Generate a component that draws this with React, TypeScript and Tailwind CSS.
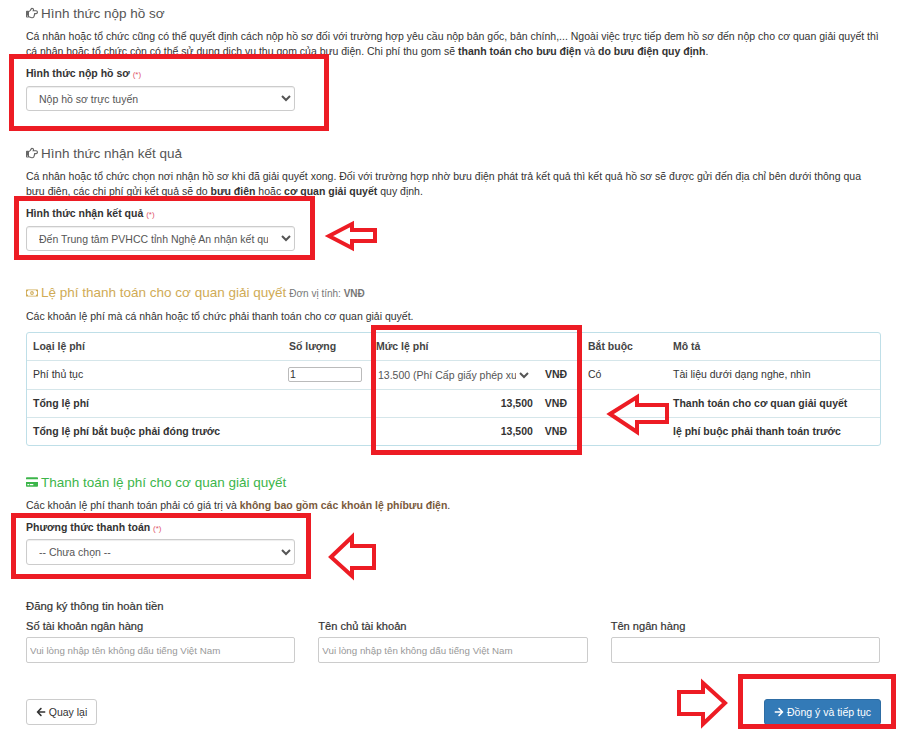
import React from "react";
import { FaRegHandPointRight, FaRegMoneyBillAlt, FaCreditCard, FaArrowLeft, FaArrowRight } from "react-icons/fa";

const RED = "#ed1c24";

function Heading({ icon, children, className = "" }: { icon: React.ReactNode; children: React.ReactNode; className?: string }) {
  return (
    <div className={`flex h-[26px] items-center gap-[3px] text-[13.5px] ${className}`}>
      {icon}
      <span className="whitespace-nowrap">{children}</span>
    </div>
  );
}

function Label({ text, className = "" }: { text: string; className?: string }) {
  return (
    <div className={`h-[15px] text-[10.5px] font-bold leading-[15px] text-[#333] ${className}`}>
      {text} <span className="text-[8px] font-normal text-[#e0556b]">(*)</span>
    </div>
  );
}

function Sel({ text, className = "" }: { text: string; className?: string }) {
  return (
    <select
      defaultValue={text}
      className={`block w-[269px] rounded-[3px] border border-[#ccc] bg-white pl-[8px] pr-[10px] text-[10.5px] text-[#555] shadow-[inset_0_1px_1px_rgba(0,0,0,0.07)] ${className}`}
    >
      <option>{text}</option>
    </select>
  );
}

function Field({ label, placeholder }: { label: string; placeholder?: string }) {
  return (
    <div>
      <div className="h-[15px] text-[11.1px] font-normal leading-[15px] text-[#333] [-webkit-text-stroke:0.2px_#333]">{label}</div>
      <input
        placeholder={placeholder}
        className="mt-[3px] block h-[26px] w-full rounded-[2px] border border-[#ccc] bg-white px-[3px] text-[9.75px] text-[#555] outline-none placeholder:text-[#999]"
      />
    </div>
  );
}

const cell = "border-t border-[#d5e6ea] px-[6px] align-middle";

function Overlay() {
  const rects = [
    [9, 54, 329, 131],
    [14, 196, 315, 260],
    [371, 325, 582, 455],
    [11, 513, 311, 579],
    [738, 674, 896, 729],
  ];
  const arrows = [
    "329,236 352,224 352,230 375,230 375,241 352,241 352,248",
    "610,414 637,397 637,405 667,405 667,422 637,422 637,432",
    "331,557 352,537 352,546 374,546 374,568 352,568 352,576",
    "725,703 703,683 703,692 679,692 679,714 703,714 703,724",
  ];
  return (
    <svg className="pointer-events-none absolute left-0 top-0" width="913" height="733" viewBox="0 0 913 733" fill="none">
      {rects.map(([a, b, c, d], i) => (
        <rect key={i} x={a + 2.5} y={b + 2.5} width={c - a - 5} height={d - b - 5} stroke={RED} strokeWidth="5" />
      ))}
      {arrows.map((p, i) => (
        <polygon key={i} points={p} stroke={RED} strokeWidth="4" strokeLinejoin="miter" />
      ))}
    </svg>
  );
}

export default function App() {
  const hand = <FaRegHandPointRight className="h-[12px] w-[12px] text-[#666]" />;
  return (
    <div className="relative h-[733px] w-[913px] overflow-hidden bg-white pl-[26px] pr-[32px] font-['Liberation_Sans',Arial,sans-serif] text-[10.5px] leading-[15px] text-[#333]">
      <section>
        <Heading icon={hand} className="text-[#555]">Hình thức nộp hồ sơ</Heading>
        <p className="mt-[3px] whitespace-nowrap">
          Cá nhân hoặc tổ chức cũng có thể quyết định cách nộp hồ sơ đối với trường hợp yêu cầu nộp bản gốc, bản chính,... Ngoài việc trực tiếp đem hồ sơ đến nộp cho cơ quan giải quyết thì
          <br />
          cá nhân hoặc tổ chức còn có thể sử dụng dịch vụ thu gom của bưu điện. Chi phí thu gom sẽ <b>thanh toán cho bưu điện</b> và <b>do bưu điện quy định</b>.
        </p>
        <Label text="Hình thức nộp hồ sơ" className="mt-[7px]" />
        <Sel text="Nộp hồ sơ trực tuyến" className="mt-[5px] h-[25px]" />
      </section>

      <section className="mt-[29px]">
        <Heading icon={hand} className="text-[#555]">Hình thức nhận kết quả</Heading>
        <p className="mt-[3px] whitespace-nowrap">
          Cá nhân hoặc tổ chức chọn nơi nhận hồ sơ khi đã giải quyết xong. Đối với trường hợp nhờ bưu điện phát trả kết quả thì kết quả hồ sơ sẽ được gửi đến địa chỉ bên dưới thông qua
          <br />
          bưu điện, các chi phí gửi kết quả sẽ do <b>bưu điện</b> hoặc <b>cơ quan giải quyết</b> quy định.
        </p>
        <Label text="Hình thức nhận kết quả" className="mt-[7px]" />
        <Sel text="Đến Trung tâm PVHCC tỉnh Nghệ An nhận kết quả" className="mt-[5px] h-[25px]" />
      </section>

      <section className="mt-[29px]">
        <Heading icon={<FaRegMoneyBillAlt className="h-[12px] w-[12px] text-[#d0ab55]" />} className="text-[#d0ab55]">
          Lệ phí thanh toán cho cơ quan giải quyết
          <span className="ml-[3px] text-[10px] text-[#777]">
            Đơn vị tính: <b>VNĐ</b>
          </span>
        </Heading>
        <p className="mt-[3px]">Các khoản lệ phí mà cá nhân hoặc tổ chức phải thanh toán cho cơ quan giải quyết.</p>
        <div className="mt-[8px] w-[855px] overflow-hidden rounded-[3px] border border-[#bfdfe8]">
          <table className="w-full table-fixed border-collapse text-[10.5px] leading-[15px]">
            <colgroup>
              <col className="w-[256px]" />
              <col className="w-[87px]" />
              <col className="w-[212px]" />
              <col className="w-[85px]" />
              <col />
            </colgroup>
            <tbody>
              <tr className="h-[27px] font-bold text-[#444]">
                <td className="px-[6px]">Loại lệ phí</td>
                <td className="px-[6px]">Số lượng</td>
                <td className="px-[6px]">Mức lệ phí</td>
                <td className="px-[6px]">Bắt buộc</td>
                <td className="px-[6px]">Mô tả</td>
              </tr>
              <tr className="h-[29px]">
                <td className={cell}>Phí thủ tục</td>
                <td className={cell}>
                  <input defaultValue="1" className="-ml-[1px] block h-[15px] w-[74px] rounded-[2px] border border-[#bbb] px-[1px] text-[10.5px] text-[#333] outline-none" />
                </td>
                <td className={cell}>
                  <div className="flex items-center">
                    <select className="-ml-[2px] w-[158px] border-0 bg-white pl-0 text-[10.5px] text-[#555] outline-none">
                      <option>13.500 (Phí Cấp giấy phép xuất bản)</option>
                    </select>
                    <b className="ml-[13px]">VNĐ</b>
                  </div>
                </td>
                <td className={cell}>Có</td>
                <td className={cell}>Tài liệu dưới dạng nghe, nhìn</td>
              </tr>
              <tr className="h-[28px] font-bold">
                <td className={cell}>Tổng lệ phí</td>
                <td className={cell}></td>
                <td className={cell}>
                  <div className="flex justify-end pr-[9px]">
                    13,500<span className="ml-[12px]">VNĐ</span>
                  </div>
                </td>
                <td className={cell}></td>
                <td className={cell}>Thanh toán cho cơ quan giải quyết</td>
              </tr>
              <tr className="h-[28px] font-bold">
                <td className={cell}>Tổng lệ phí bắt buộc phải đóng trước</td>
                <td className={cell}></td>
                <td className={cell}>
                  <div className="flex justify-end pr-[9px]">
                    13,500<span className="ml-[12px]">VNĐ</span>
                  </div>
                </td>
                <td className={cell}></td>
                <td className={cell}>lệ phí buộc phải thanh toán trước</td>
              </tr>
            </tbody>
          </table>
        </div>
      </section>

      <section className="mt-[23px]">
        <Heading icon={<FaCreditCard className="h-[12px] w-[12px] text-[#3cb54a]" />} className="text-[#3cb54a]">
          Thanh toán lệ phí cho cơ quan giải quyết
        </Heading>
        <p className="mt-[3px]">
          Các khoản lệ phí thanh toán phải có giá trị và <b className="text-[#7a5a3c]">không bao gồm các khoản lệ phíbưu điện</b>.
        </p>
        <Label text="Phương thức thanh toán" className="mt-[7px]" />
        <Sel text="-- Chưa chọn --" className="mt-[4px] h-[26px]" />
      </section>

      <section className="mt-[34px]">
        <div className="h-[15px] text-[11.3px] leading-[15px] [-webkit-text-stroke:0.2px_#333]">Đăng ký thông tin hoàn tiền</div>
        <div className="mt-[5px] grid w-[854px] grid-cols-3 gap-[23px]">
          <Field label="Số tài khoản ngân hàng" placeholder="Vui lòng nhập tên không dấu tiếng Việt Nam" />
          <Field label="Tên chủ tài khoản" placeholder="Vui lòng nhập tên không dấu tiếng Việt Nam" />
          <Field label="Tên ngân hàng" />
        </div>
      </section>

      <div className="mt-[36px] flex w-[855px] items-start justify-between">
        <button className="flex h-[26px] w-[71px] items-center justify-center gap-[3px] rounded-[3px] border border-[#ccc] bg-white text-[10.5px] text-[#333]">
          <FaArrowLeft className="h-[10px] w-[10px]" />
          Quay lại
        </button>
        <button className="flex h-[26px] w-[117px] items-center justify-center gap-[3px] rounded-[3px] border border-[#2e6da4] bg-[#337ab7] text-[10.5px] text-white">
          <FaArrowRight className="h-[10px] w-[10px]" />
          Đồng ý và tiếp tục
        </button>
      </div>

      <Overlay />
    </div>
  );
}
